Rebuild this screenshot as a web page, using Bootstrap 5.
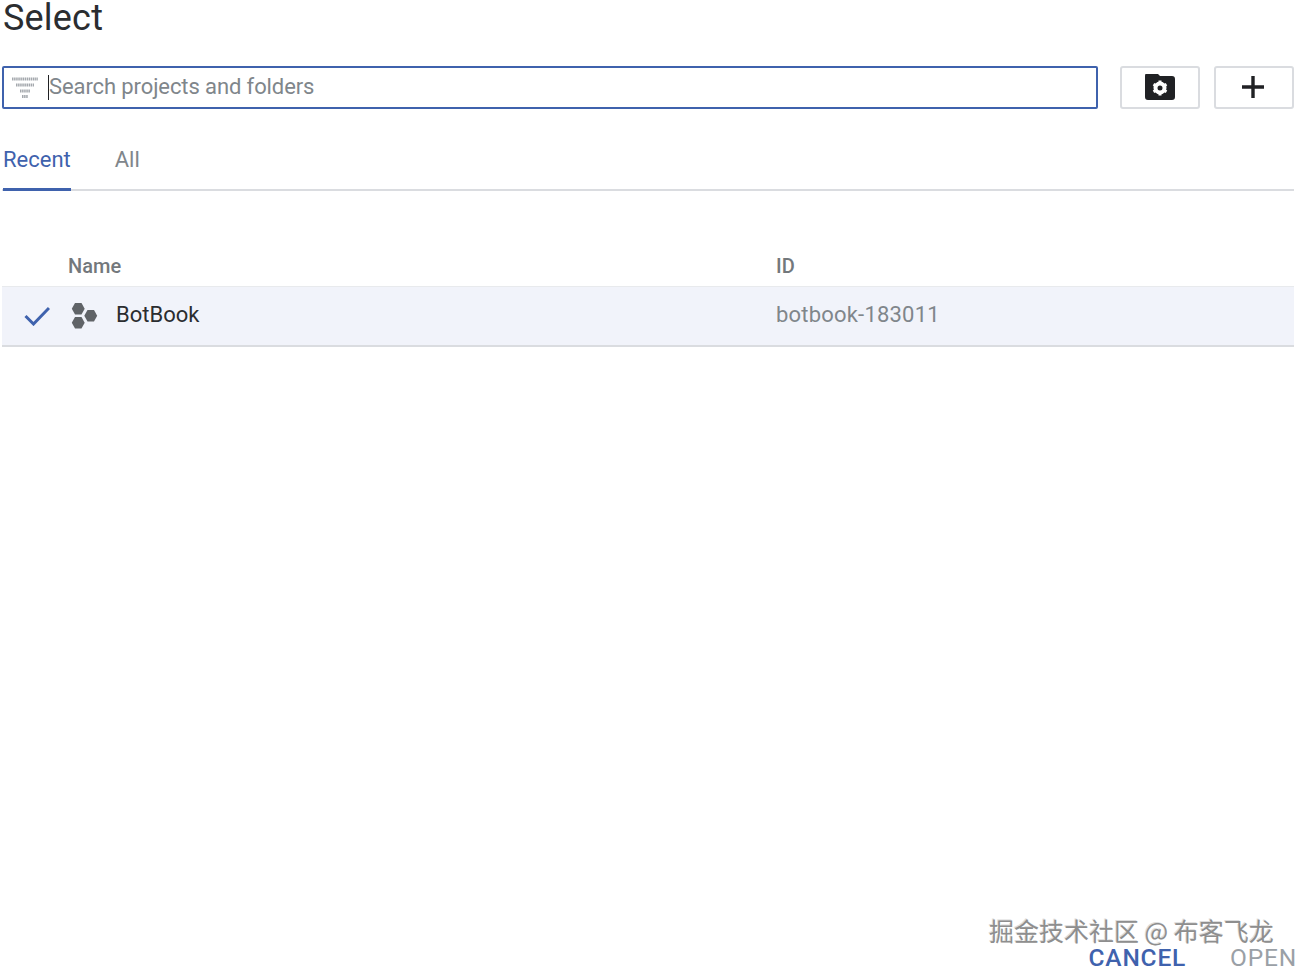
<!DOCTYPE html>
<html lang="en">
<head>
<meta charset="utf-8">
<title>Select</title>
<link rel="stylesheet" href="https://cdn.jsdelivr.net/npm/bootstrap@5.3.0/dist/css/bootstrap.min.css">
<style>
html,body{height:971px;overflow:hidden}
body{font-family:Roboto,"Liberation Sans",sans-serif;background:#fff;color:#202124}
.pick-page{height:971px;padding:0 6px 0 2px;overflow:hidden}
.pick-title{font-size:36px;line-height:36px;font-weight:400;margin:0 0 30px 1px;color:#2b2d30;height:36px;letter-spacing:.2px}
.pick-search{height:43px;gap:14px}
.pick-field{border:2px solid #3f62ad;border-radius:2px;height:43px;padding-left:8px;margin-right:8px}
.pick-caret{width:1px;height:25px;background:#202124;margin-left:10px}
.pick-hint{font-size:22px;color:#80868b;line-height:1;margin-left:0;letter-spacing:-.1px;padding-bottom:2px}
.pick-icobtn{width:80px;height:43px;border:2px solid #dadce0;border-radius:3px;background:#fff;padding:0}
.pick-tabs{border-bottom:2px solid #dadce0;height:82px;gap:44px;padding-left:1px}
.pick-tab{font-size:22px;line-height:26px;color:#80868b;height:82px;padding-top:38px}
.pick-tab.on{color:#3f62ad;border-bottom:3px solid #3f62ad}
.pick-head{padding-top:63px;height:95px;font-size:20px;line-height:24px;color:#73787c;font-weight:500}
.pick-c1{width:66px;flex:none}
.pick-c2{width:708px;flex:none}
.pick-row{height:61px;background:#f1f3fa;border-top:1px solid #e8eaed;border-bottom:2px solid #dadce0;font-size:22px}
.pick-check{width:66px;flex:none;padding-left:22px}
.pick-name{width:708px;flex:none;color:#2b2d30;gap:18px}
.pick-name span,.pick-id{padding-bottom:3px}
.pick-id{color:#80868b;letter-spacing:.2px}
.pick-foot{position:absolute;right:3px;top:942px;font-size:24.5px;line-height:32px;gap:44px}
.pick-cancel{color:#3f62ad;font-weight:500;letter-spacing:.8px}
.pick-open{color:#9aa0a6;letter-spacing:.8px}
.pick-mark{position:absolute;left:989px;top:914px;font-size:25px;line-height:32px;color:#8e8e8e;white-space:nowrap;font-family:"Noto Sans CJK SC",Roboto,sans-serif;text-shadow:1px 1px 0 #fff,-1px -1px 0 #ddd}
</style>
</head>
<body>
<div class="pick-page position-relative">
  <h1 class="pick-title">Select</h1>
  <div class="d-flex pick-search">
    <div class="pick-field flex-grow-1 d-flex align-items-center">
      <svg width="26" height="24" viewBox="0 0 26 24"><g fill="none" stroke="#a4a8ad" stroke-width="3" stroke-dasharray="1.500 .6"><path d="M0 3h26"/><path d="M4 9h18"/><path d="M8 15h10"/><path d="M10 20.500h6"/></g></svg>
      <span class="pick-caret"></span>
      <span class="pick-hint">Search projects and folders</span>
    </div>
    <button class="pick-icobtn d-flex align-items-center justify-content-center" aria-label="New folder">
      <svg width="30" height="27" viewBox="0 1 30 27"><path d="M3 0h9l3 3h12a3 3 0 0 1 3 3v18a3 3 0 0 1-3 3H3a3 3 0 0 1-3-3V3a3 3 0 0 1 3-3z" fill="#202124"/><circle cx="15" cy="15" r="4.500" fill="none" stroke="#fff" stroke-width="4"/><path d="M15 7.500v3M15 19.500v3M8.500 11.200l2.600 1.500M18.900 17.300l2.600 1.500M8.500 18.800l2.600-1.500M18.900 12.700l2.600-1.500" stroke="#fff" stroke-width="3"/></svg>
    </button>
    <button class="pick-icobtn d-flex align-items-center justify-content-center" aria-label="Add">
      <svg width="24" height="24" viewBox="1 1 24 24"><path d="M12 1v22M1 12h22" stroke="#202124" stroke-width="3.400" fill="none"/></svg>
    </button>
  </div>
  <div class="d-flex pick-tabs">
    <div class="pick-tab on">Recent</div>
    <div class="pick-tab">All</div>
  </div>
  <div class="d-flex pick-head">
    <div class="pick-c1"></div>
    <div class="pick-c2">Name</div>
    <div>ID</div>
  </div>
  <div class="d-flex align-items-center pick-row">
    <div class="pick-check"><svg class="d-block" width="26" height="20" viewBox="0 0 26 20"><path d="M1.500 10l8 8L25 2" fill="none" stroke="#3f62ad" stroke-width="3"/></svg></div>
    <div class="pick-name d-flex align-items-center">
      <svg width="30" height="28" viewBox="0 0 30 28"><defs><pattern id="pickdots" width="2" height="2" patternUnits="userSpaceOnUse"><rect width="2" height="2" fill="#7c7f84"/><circle cx="1" cy="1" r=".8" fill="#3c3e42"/></pattern></defs><g fill="url(#pickdots)"><path d="M7 1h6.500l3.200 5.700-3.200 5.700H7L3.800 6.700z"/><path d="M19.500 8H26l3.200 5.700-3.200 5.700h-6.500l-3.200-5.700z"/><path d="M7 15h6.500l3.200 5.700-3.200 5.700H7l-3.200-5.700z"/></g></svg>
      <span>BotBook</span>
    </div>
    <div class="pick-id">botbook-183011</div>
  </div>
  <div class="pick-mark">掘金技术社区 @ 布客飞龙</div>
  <div class="d-flex pick-foot">
    <span class="pick-cancel">CANCEL</span>
    <span class="pick-open">OPEN</span>
  </div>
</div>
<script src="https://cdn.jsdelivr.net/npm/bootstrap@5.3.0/dist/js/bootstrap.bundle.min.js"></script>
</body>
</html>
